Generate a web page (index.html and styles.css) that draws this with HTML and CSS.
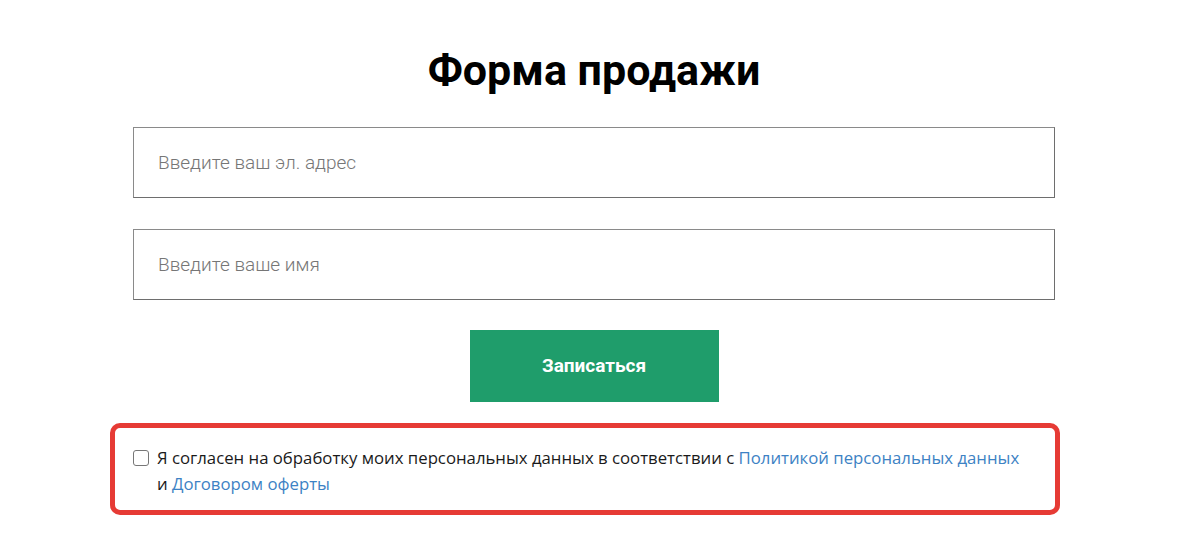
FILE: index.html
```html
<!DOCTYPE html>
<html lang="ru">
<head>
<meta charset="utf-8">
<title>Форма продажи</title>
<link rel="stylesheet" href="styles.css">
</head>
<body>
<div class="page">
  <h1 class="title">Форма продажи</h1>
  <form class="form">
    <input class="field" type="email" placeholder="Введите ваш эл. адрес">
    <input class="field" type="text" placeholder="Введите ваше имя">
    <div class="actions">
      <button class="submit" type="button">Записаться</button>
    </div>
    <div class="consent">
      <label class="consent-row">
        <input class="check" type="checkbox">
        <span class="consent-text">Я согласен на обработку моих персональных данных в соответствии с <a href="#" class="link">Политикой персональных данных</a> и <a href="#" class="link">Договором оферты</a></span>
      </label>
    </div>
  </form>
</div>
</body>
</html>
```
FILE: styles.css
```css
html, body {
  margin: 0;
  padding: 0;
  background: #ffffff;
}
.page {
  width: 922px;
  margin-left: 133px;
  padding-top: 41px;
}
.title {
  margin: 0 0 28px;
  text-align: center;
  font-family: Roboto, "Liberation Sans", sans-serif;
  font-weight: 700;
  font-size: 43px;
  line-height: 58px;
  color: #000;
}
.form {
  display: flex;
  flex-direction: column;
}
.field {
  box-sizing: border-box;
  height: 71px;
  width: 100%;
  margin: 0 0 31px;
  padding: 0 24px;
  border: 1px solid #8a8a8a;
  border-right-color: #6e6e6e;
  border-bottom-color: #6e6e6e;
  background: #fff;
  font-family: Roboto, "Liberation Sans", sans-serif;
  font-weight: 300;
  font-size: 19px;
  color: #333;
  outline: none;
}
.field::placeholder {
  color: #767676;
}
.actions {
  display: flex;
  justify-content: center;
}
.submit {
  width: 249px;
  height: 72px;
  margin-top: -1px;
  padding: 0 0 2px;
  border: 0;
  background: #1f9d6b;
  color: #fff;
  font-family: Roboto, "Liberation Sans", sans-serif;
  font-weight: 700;
  font-size: 19px;
  cursor: pointer;
}
.consent {
  box-sizing: border-box;
  width: 950px;
  margin: 21px 0 0 -23px;
  height: 92px;
  border: 5px solid #e63b35;
  border-radius: 10px;
  padding: 17px 30px 0 18px;
}
.consent-row {
  display: flex;
  align-items: flex-start;
  gap: 8px;
  font-family: "Open Sans", "Noto Sans", sans-serif;
  font-size: 16.75px;
  line-height: 26px;
  color: #1a1a1a;
}
.check {
  appearance: none;
  -webkit-appearance: none;
  flex: none;
  box-sizing: border-box;
  width: 16px;
  height: 16px;
  margin: 5px 0 0;
  border: 1px solid #777;
  border-radius: 3px;
  background: #fff;
}
.link {
  color: #3d82c4;
  text-decoration: none;
}
```
